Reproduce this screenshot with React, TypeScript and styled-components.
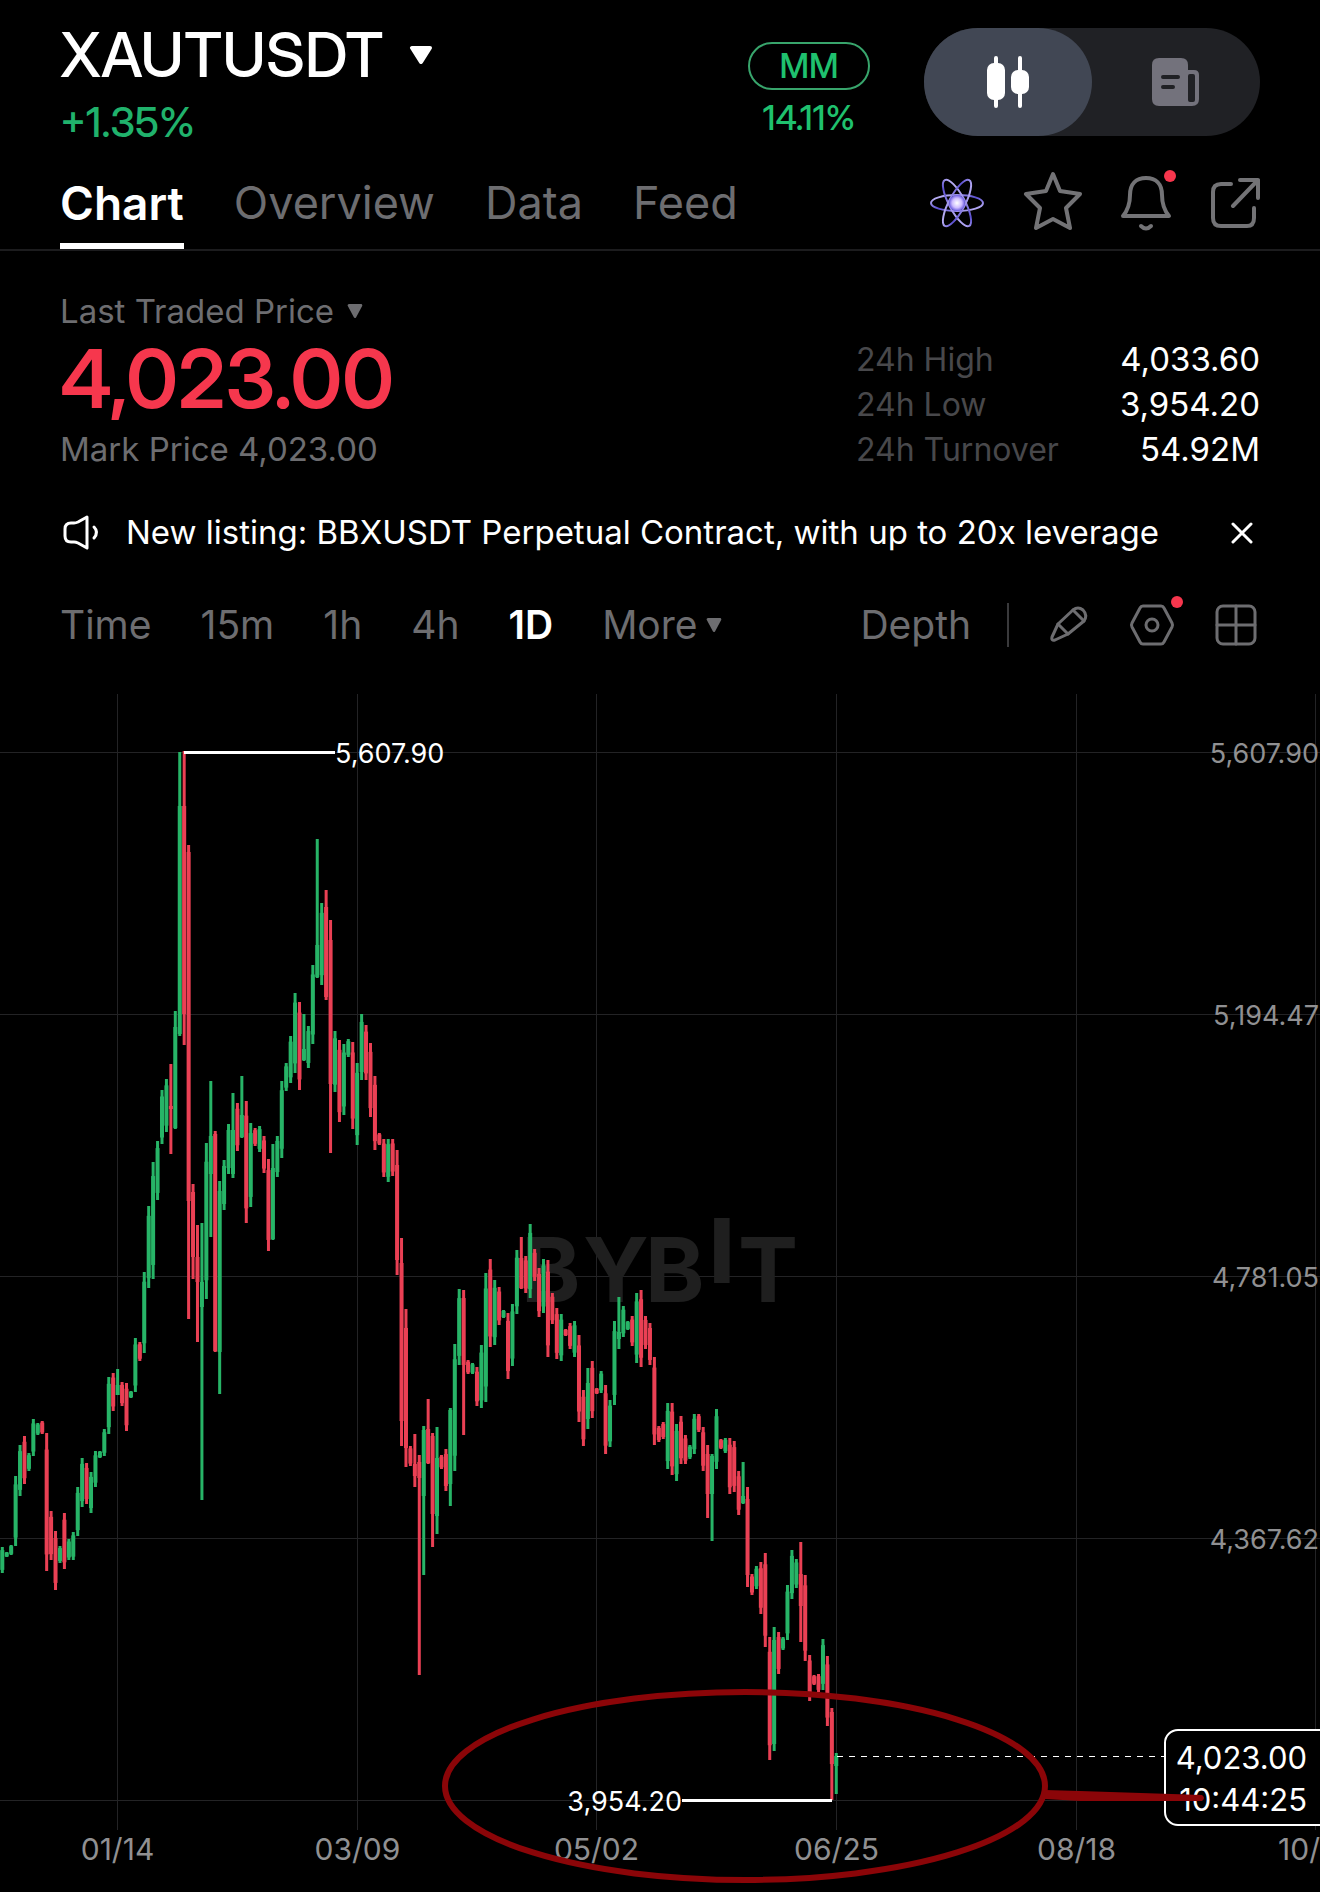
import React, { useState } from "react";
import styled, { createGlobalStyle, css } from "styled-components";

const color = {
  bg: "#000000",
  text: "#ffffff",
  muted: "#6d6d70",
  dim: "#48484b",
  line: "#1c1c1e",
  grid: "#232325",
  green: "#20b26c",
  greenBright: "#1fc16e",
  red: "#f6374d",
  candleUp: "#27b467",
  candleDown: "#ea4054",
  axis: "#909092",
  mark: "#8b0508",
};

const GlobalStyle = createGlobalStyle`
  *, *::before, *::after { box-sizing: border-box; }
  body {
    margin: 0;
    background: ${color.bg};
    color: ${color.text};
    font-family: Inter, "Liberation Sans", sans-serif;
  }
`;

const displayFont = css`
  font-family: "Inter Display", Inter, "Liberation Sans", sans-serif;
  font-variation-settings: "opsz" 32;
`;

const Page = styled.main`
  width: 100%;
  overflow: hidden;
`;

const PlainButton = styled.button`
  border: 0;
  padding: 0;
  background: none;
  color: inherit;
  font: inherit;
  display: flex;
  align-items: center;
  cursor: pointer;
`;

const Row = styled.div`
  display: flex;
  padding: 0 60px;
`;

const Header = styled(Row).attrs({ as: "header" })`
  padding-top: 28px;
  align-items: flex-start;
`;

const TitleBlock = styled.div`
  flex: 1;
`;

const PairButton = styled(PlainButton)`
  gap: 25px;
`;

const PairName = styled.h1`
  ${displayFont}
  margin: 0;
  font-size: 62px;
  line-height: 54px;
  font-weight: 500;
`;

const Change = styled.p`
  ${displayFont}
  margin: 20px 0 0;
  font-size: 41px;
  line-height: 40px;
  font-weight: 500;
  color: ${color.green};
`;

const MarginBlock = styled.div`
  ${displayFont}
  display: flex;
  flex-direction: column;
  align-items: center;
  gap: 11px;
  margin: 14px 54px 0 0;
  color: ${color.greenBright};
  font-size: 34px;
  line-height: 34px;
  font-weight: 500;
`;

const Pill = styled.span`
  display: flex;
  align-items: center;
  justify-content: center;
  width: 122px;
  height: 48px;
  border: 2px solid #38a56c;
  border-radius: 24px;
`;

const Toggle = styled.div`
  display: flex;
  width: 336px;
  height: 108px;
  border-radius: 54px;
  background: #202125;
`;

const ToggleButton = styled(PlainButton)<{ $active?: boolean }>`
  flex: 1;
  justify-content: center;
  border-radius: 54px;
  background: ${(p) => (p.$active ? "#414754" : "transparent")};
`;

const TabBar = styled(Row).attrs({ as: "nav" })`
  margin-top: 35px;
  justify-content: space-between;
  border-bottom: 2px solid ${color.line};
`;

const Tabs = styled.div`
  display: flex;
  gap: 50px;
`;

const Tab = styled(PlainButton)<{ $active?: boolean }>`
  padding-bottom: 14px;
  border-bottom: 6px solid ${(p) => (p.$active ? color.text : "transparent")};
  font-size: ${(p) => (p.$active ? 46 : 45)}px;
  line-height: 52px;
  font-weight: ${(p) => (p.$active ? 600 : 400)};
  color: ${(p) => (p.$active ? color.text : color.muted)};
`;

const TabActions = styled.div`
  display: flex;
  align-items: center;
  gap: 38px;
  height: 52px;
  color: #737376;
`;

const Badged = styled(PlainButton)`
  position: relative;
`;

const Dot = styled.span<{ $offset: number }>`
  position: absolute;
  top: -${(p) => p.$offset}px;
  right: -${(p) => p.$offset}px;
  width: 12px;
  height: 12px;
  border-radius: 50%;
  background: #f7364d;
`;

const PriceSection = styled(Row).attrs({ as: "section" })`
  padding-top: 40px;
  justify-content: space-between;
  align-items: flex-end;
`;

const PriceKind = styled(PlainButton)`
  gap: 13px;
  font-size: 33px;
  line-height: 40px;
  color: ${color.muted};
`;

const LastPrice = styled.p`
  ${displayFont}
  margin: 8px 0 7px;
  font-size: 81px;
  line-height: 80px;
  font-weight: 600;
  color: ${color.red};
`;

const MarkPrice = styled.p`
  margin: 0;
  font-size: 33px;
  line-height: 46px;
  color: ${color.muted};
`;

const Stats = styled.table`
  border-collapse: collapse;
  width: 404px;
  line-height: 45px;

  th {
    padding: 0;
    text-align: left;
    font-size: 32px;
    font-weight: 400;
    color: ${color.dim};
  }
  td {
    padding: 0;
    text-align: right;
    font-size: 33px;
  }
`;

const Notice = styled(Row)`
  margin-top: 40px;
  align-items: center;
  font-size: 33px;
  line-height: 40px;
`;

const NoticeText = styled.p`
  flex: 1;
  margin: 0 0 0 24px;
  white-space: nowrap;
`;

const CloseButton = styled(PlainButton)`
  margin-right: 7px;
`;

const Toolbar = styled(Row)`
  margin-top: 49px;
  align-items: center;
  justify-content: space-between;
  font-size: 39px;
  line-height: 48px;
  color: ${color.muted};
`;

const Periods = styled.div`
  display: flex;
  gap: 49px;
`;

const Period = styled(PlainButton)<{ $active?: boolean }>`
  gap: 8px;
  font-weight: ${(p) => (p.$active ? 600 : 400)};
  color: ${(p) => (p.$active ? color.text : color.muted)};
`;

const Tools = styled.div`
  display: flex;
  align-items: center;
  gap: 40px;
  margin-right: 3px;
`;

const Divider = styled.span`
  width: 2px;
  height: 44px;
  margin-left: -4px;
  background: #3a3a3c;
`;

const ChartArea = styled.figure`
  margin: 45px 0 0;
`;

const ChartSvg = styled.svg`
  display: block;
  width: 100%;
  height: auto;
  font-family: Inter, "Liberation Sans", sans-serif;
`;

function Caret({ width, height }: { width: number; height: number }) {
  return (
    <svg width={width} height={height} viewBox="0 0 24 20" preserveAspectRatio="none" aria-hidden="true">
      <path
        d="M3 2H21L12 18Z"
        fill="currentColor"
        stroke="currentColor"
        strokeWidth="4"
        strokeLinejoin="round"
      />
    </svg>
  );
}

type IconProps = { w: number; h: number; stroke?: number; children: React.ReactNode };

function Icon({ w, h, stroke = 3, children }: IconProps) {
  return (
    <svg
      width={w}
      height={h}
      viewBox={`0 0 ${w} ${h}`}
      fill="none"
      stroke="currentColor"
      strokeWidth={stroke}
      strokeLinejoin="round"
      strokeLinecap="round"
      aria-hidden="true"
    >
      {children}
    </svg>
  );
}

const CandlesIcon = () => (
  <Icon w={46} h={56} stroke={4}>
    <path d="M11 4V52M35 4V52" />
    <g fill="currentColor" stroke="none">
      <rect x="2" y="9" width="18" height="37" rx="7" />
      <rect x="26" y="16" width="18" height="24" rx="7" />
    </g>
  </Icon>
);

const NewsIcon = () => (
  <Icon w={48} h={48} stroke={4}>
    <g stroke="none">
      <path d="M30 12H42Q47 12 47 17V41Q47 48 40 48H24Z" fill="#73727c" />
      <rect x="36" y="16" width="7" height="28" rx="2" fill="#202125" />
      <path d="M7 0H29Q36 0 36 7V48H7Q0 48 0 41V7Q0 0 7 0Z" fill="#73727c" />
    </g>
    <path d="M11 19H26M11 29H21" stroke="#202125" />
  </Icon>
);

const AtomIcon = () => (
  <Icon w={54} h={52} stroke={2}>
    <defs>
      <linearGradient id="orbit" x1="0" y1="0" x2="1" y2="1">
        <stop offset="0" stopColor="#d9d0ff" />
        <stop offset="0.5" stopColor="#5b4fd0" />
        <stop offset="1" stopColor="#d3c8ff" />
      </linearGradient>
      <radialGradient id="nucleus">
        <stop offset="0" stopColor="#ffffff" />
        <stop offset="0.6" stopColor="#cdbcff" />
        <stop offset="1" stopColor="#6a5be0" />
      </radialGradient>
    </defs>
    <g stroke="url(#orbit)">
      <ellipse cx="27" cy="26" rx="26" ry="8" />
      <ellipse cx="27" cy="26" rx="26" ry="8" transform="rotate(62 27 26)" />
      <ellipse cx="27" cy="26" rx="26" ry="8" transform="rotate(-62 27 26)" />
    </g>
    <circle cx="27" cy="26" r="8" fill="url(#nucleus)" stroke="none" />
  </Icon>
);

const StarIcon = () => (
  <Icon w={60} h={64} stroke={4}>
    <path d="M31 3L38 20L58 23L44 37L48 57L31 48L14 57L18 37L4 23L24 20Z" />
  </Icon>
);

const BellIcon = () => (
  <Icon w={52} h={58} stroke={4}>
    <path d="M3 42C8 36 10 30 10 21C10 10 16 4 26 4S42 10 42 21C42 30 44 36 49 42Z" />
    <path d="M21 52Q26 57 31 52" />
  </Icon>
);

const ShareIcon = () => (
  <Icon w={50} h={52} stroke={4}>
    <path d="M21 7H11Q3 7 3 15V41Q3 49 11 49H37Q44 49 44 41V31" />
    <path d="M30 3H48V21M48 3L23 29" />
  </Icon>
);

const SpeakerIcon = () => (
  <Icon w={42} h={38}>
    <path d="M27 4L18 9Q16 10 14 10H11Q5 10 5 16V23Q5 29 11 29H14Q16 29 18 30L27 35Z" />
    <path d="M34 14Q39 19 34 25" />
  </Icon>
);

const CloseIcon = () => (
  <Icon w={22} h={24}>
    <path d="M2 4L20 22M20 4L2 22" />
  </Icon>
);

const PencilIcon = () => (
  <Icon w={40} h={38}>
    <path d="M9 18L24 4Q29 0 34 4Q39 9 35 15L19 28L6 34Q2 35 3 31Z" />
    <path d="M24 4L35 15M9 18L19 28" />
  </Icon>
);

const HexIcon = () => (
  <Icon w={46} h={42}>
    <path d="M14 2H32Q34 2 35 4L43 19Q44 21 43 23L35 38Q34 40 32 40H14Q12 40 11 38L3 23Q2 21 3 19L11 4Q12 2 14 2Z" />
    <circle cx="23" cy="21" r="6" />
  </Icon>
);

const GridIcon = () => (
  <Icon w={42} h={42}>
    <rect x="2" y="2" width="38" height="38" rx="6" />
    <path d="M21 2V40M2 21H40" />
  </Icon>
);

/* One daily candle: direction, wick top, wick bottom, optional body top and bottom. */
type Candle = ["G" | "R", number, number, number?, number?];

const candles: Candle[] = [
  ["G", 853, 879], ["G", 858, 863], ["G", 851, 861], ["G", 782, 852], ["G", 751, 802],
  ["R", 742, 790], ["G", 759, 777], ["G", 725, 762], ["G", 729, 741], ["R", 727, 740],
  ["R", 739, 877], ["R", 817, 866], ["R", 837, 896], ["G", 852, 869], ["R", 819, 875],
  ["G", 845, 866], ["G", 838, 866], ["G", 793, 842], ["G", 764, 813], ["R", 769, 810],
  ["G", 778, 819], ["G", 757, 793], ["G", 757, 764], ["G", 735, 762], ["G", 683, 740],
  ["R", 679, 717], ["G", 675, 701, 691, 701], ["R", 688, 712], ["R", 689, 737], ["G", 697, 704],
  ["G", 644, 698], ["R", 648, 667], ["G", 578, 659], ["G", 512, 594], ["G", 468, 585],
  ["G", 447, 506], ["G", 396, 450], ["G", 385, 438], ["R", 370, 460, 412, 415], ["G", 317, 435, 333, 434],
  ["G", 58, 342, 112, 340], ["R", 57, 351, 112, 320], ["R", 151, 625, 158, 507], ["R", 490, 585, 498, 563], ["R", 531, 648, 563, 588],
  ["G", 529, 806, 588, 613], ["G", 449, 605], ["G", 387, 543, 442, 480], ["R", 437, 658, 440, 657], ["G", 487, 700, 497, 658],
  ["G", 466, 516], ["G", 430, 480], ["G", 399, 484, 436, 480], ["R", 409, 457], ["G", 382, 444, 421, 443],
  ["R", 407, 529], ["G", 429, 513], ["R", 434, 452], ["G", 432, 458], ["R", 442, 479],
  ["R", 465, 557], ["G", 450, 546, 474, 545], ["G", 442, 483], ["G", 387, 464], ["G", 369, 397],
  ["G", 342, 389], ["G", 299, 379], ["R", 308, 396], ["G", 320, 367, 355, 366], ["G", 332, 374],
  ["G", 271, 350], ["G", 145, 284, 251, 283], ["G", 209, 291], ["R", 196, 306, 213, 303], ["R", 226, 459, 246, 390],
  ["G", 337, 398], ["R", 346, 428], ["G", 350, 421], ["G", 345, 363], ["R", 348, 435],
  ["G", 369, 451], ["G", 320, 386], ["R", 331, 386], ["R", 349, 423], ["R", 382, 456],
  ["R", 439, 451], ["R", 445, 483], ["G", 445, 488], ["R", 445, 482], ["R", 456, 581],
  ["R", 544, 752], ["R", 615, 773], ["R", 752, 772], ["R", 740, 793, 770, 782], ["R", 761, 981, 768, 784],
  ["G", 732, 881, 736, 802], ["R", 705, 770, 735, 769], ["R", 739, 853, 742, 820], ["G", 733, 840, 764, 822], ["R", 761, 775],
  ["R", 755, 797], ["G", 714, 812, 716, 790], ["G", 650, 777], ["G", 595, 671], ["R", 596, 741, 604, 671],
  ["R", 666, 680], ["G", 669, 680], ["R", 673, 712], ["G", 651, 714], ["G", 579, 708],
  ["R", 565, 653], ["G", 586, 651], ["R", 593, 631], ["G", 616, 624], ["R", 619, 685],
  ["G", 610, 672], ["G", 556, 620], ["R", 543, 595, 564, 594], ["R", 562, 599], ["G", 530, 604],
  ["R", 555, 587], ["R", 574, 623], ["G", 565, 619], ["R", 566, 663], ["R", 599, 630],
  ["R", 614, 665], ["G", 620, 667], ["R", 635, 642], ["R", 629, 655], ["G", 627, 663],
  ["R", 641, 728], ["R", 696, 752], ["G", 674, 735, 689, 725], ["R", 667, 724], ["R", 694, 700],
  ["G", 677, 699], ["R", 691, 760], ["G", 706, 753], ["G", 627, 711], ["G", 603, 655, 638, 645],
  ["G", 612, 643], ["G", 627, 636], ["R", 622, 652], ["G", 599, 669], ["R", 596, 673],
  ["R", 622, 655], ["R", 629, 671], ["R", 663, 751], ["R", 732, 748], ["R", 728, 745],
  ["G", 709, 775], ["R", 709, 781], ["G", 730, 787], ["R", 722, 770], ["R", 741, 770],
  ["G", 751, 765], ["G", 720, 760], ["R", 720, 738], ["R", 733, 777], ["R", 751, 824, 760, 800],
  ["G", 760, 847, 762, 800], ["G", 715, 775], ["R", 745, 755], ["G", 744, 759], ["R", 744, 800],
  ["R", 747, 798], ["R", 777, 821], ["G", 768, 810, 802, 809], ["R", 793, 893], ["R", 880, 901],
  ["G", 872, 895], ["R", 868, 920], ["R", 859, 953], ["R", 943, 1066], ["G", 933, 1057, 946, 1050],
  ["R", 938, 980], ["G", 943, 956], ["G", 891, 946], ["G", 856, 905], ["G", 865, 894],
  ["R", 848, 948, 880, 912], ["R", 881, 967], ["R", 961, 1007], ["R", 981, 991], ["R", 980, 998],
  ["G", 945, 996], ["R", 962, 1032], ["R", 1014, 1106, 1018, 1070], ["G", 1059, 1100, 1062, 1072],
];

const FIRST_X = 2.3;
const STEP = 4.436;

const priceAxis = [
  { label: "5,607.90", y: 58.5 },
  { label: "5,194.47", y: 320.5 },
  { label: "4,781.05", y: 582.5 },
  { label: "4,367.62", y: 844.5 },
  { label: "", y: 1106.5 },
];

const dateAxis = [
  { label: "01/14", x: 117.5 },
  { label: "03/09", x: 357.5 },
  { label: "05/02", x: 596.5 },
  { label: "06/25", x: 836.5 },
  { label: "08/18", x: 1076.5 },
];

const watermark = [
  { letter: "B", x: 521, y: 608, weight: 700 },
  { letter: "Y", x: 583, y: 608, weight: 700 },
  { letter: "B", x: 645, y: 608, weight: 700 },
  { letter: "I", x: 709, y: 589, weight: 800 },
  { letter: "T", x: 738, y: 608, weight: 700 },
];

function CandleShape({ candle, index }: { candle: Candle; index: number }) {
  const [dir, high, low, top, bottom] = candle;
  const inset = (low - high) * 0.12;
  const bodyTop = top ?? high + inset;
  const bodyBottom = bottom ?? low - inset;
  const x = FIRST_X + index * STEP;
  return (
    <g fill={dir === "G" ? color.candleUp : color.candleDown}>
      <rect x={x - 1.5} y={high} width={3} height={low - high} />
      <rect x={x - 2} y={bodyTop} width={4} height={bodyBottom - bodyTop} />
    </g>
  );
}

function PriceChart() {
  return (
    <ChartArea>
      <ChartSvg viewBox="0 0 1320 1198" role="img" aria-label="XAUTUSDT daily price chart">
        <g stroke={color.grid} strokeWidth="1">
          {priceAxis.map((t) => (
            <line key={t.y} x1="0" x2="1320" y1={t.y} y2={t.y} />
          ))}
          {dateAxis.map((t) => (
            <line key={t.x} x1={t.x} x2={t.x} y1="0" y2="1136" />
          ))}
          <line x1="1315.5" x2="1315.5" y1="0" y2="1136" />
        </g>
        <g fill="#1f1f1f" fontSize="90">
          {watermark.map((w) => (
            <text key={w.x} x={w.x} y={w.y} fontWeight={w.weight}>
              {w.letter}
            </text>
          ))}
        </g>
        {candles.map((c, i) => (
          <CandleShape key={i} candle={c} index={i} />
        ))}
        <g fill={color.axis} fontSize="27" textAnchor="end">
          {priceAxis.map((t) => (
            <text key={t.y} x="1319" y={t.y + 10}>
              {t.label}
            </text>
          ))}
        </g>
        <g fill={color.axis} fontSize="30" textAnchor="middle">
          {dateAxis.map((t) => (
            <text key={t.x} x={t.x} y="1166">
              {t.label}
            </text>
          ))}
          <text x="1320" y="1166" textAnchor="end">10/</text>
        </g>
        <g stroke={color.text} strokeWidth="3">
          <path d="M184 58.5H335M682 1106.5H832" />
          <path d="M837 1062.5H1165" strokeWidth="1" strokeDasharray="6 6" />
        </g>
        <g fill={color.text} fontSize="27">
          <text x="335" y="69">5,607.90</text>
          <text x="682" y="1117" textAnchor="end">3,954.20</text>
        </g>
        <rect
          x="1165"
          y="1036"
          width="170"
          height="95"
          rx="13"
          fill={color.bg}
          stroke={color.text}
          strokeWidth="2"
        />
        <g fill={color.text} fontSize="31" textAnchor="end">
          <text x="1307" y="1075">4,023.00</text>
          <text x="1307" y="1117">10:44:25</text>
        </g>
        <ellipse cx="745" cy="1092" rx="300" ry="94" fill="none" stroke={color.mark} strokeWidth="6" />
        <path
          d="M1045 1096L1080 1097L1202 1101Q1206 1104 1202 1107L1080 1107L1045 1105Z"
          fill={color.mark}
        />
      </ChartSvg>
    </ChartArea>
  );
}

const tabs = ["Chart", "Overview", "Data", "Feed"];
const periods = ["Time", "15m", "1h", "4h", "1D"];
const stats = [
  ["24h High", "4,033.60"],
  ["24h Low", "3,954.20"],
  ["24h Turnover", "54.92M"],
];

export default function App() {
  const [tab, setTab] = useState("Chart");
  const [period, setPeriod] = useState("1D");

  return (
    <Page>
      <GlobalStyle />
      <Header>
        <TitleBlock>
          <PairButton>
            <PairName>XAUTUSDT</PairName>
            <Caret width={24} height={18} />
          </PairButton>
          <Change>+1.35%</Change>
        </TitleBlock>
        <MarginBlock>
          <Pill>MM</Pill>
          <span>14.11%</span>
        </MarginBlock>
        <Toggle>
          <ToggleButton $active aria-label="Chart view">
            <CandlesIcon />
          </ToggleButton>
          <ToggleButton aria-label="News view">
            <NewsIcon />
          </ToggleButton>
        </Toggle>
      </Header>

      <TabBar>
        <Tabs>
          {tabs.map((t) => (
            <Tab key={t} $active={t === tab} onClick={() => setTab(t)}>
              {t}
            </Tab>
          ))}
        </Tabs>
        <TabActions>
          <PlainButton aria-label="Insights">
            <AtomIcon />
          </PlainButton>
          <PlainButton aria-label="Favourite">
            <StarIcon />
          </PlainButton>
          <Badged aria-label="Alerts">
            <BellIcon />
            <Dot $offset={4} />
          </Badged>
          <PlainButton aria-label="Share">
            <ShareIcon />
          </PlainButton>
        </TabActions>
      </TabBar>

      <PriceSection>
        <div>
          <PriceKind>
            Last Traded Price
            <Caret width={16} height={14} />
          </PriceKind>
          <LastPrice>4,023.00</LastPrice>
          <MarkPrice>Mark Price 4,023.00</MarkPrice>
        </div>
        <Stats>
          <tbody>
            {stats.map(([name, value]) => (
              <tr key={name}>
                <th scope="row">{name}</th>
                <td>{value}</td>
              </tr>
            ))}
          </tbody>
        </Stats>
      </PriceSection>

      <Notice>
        <SpeakerIcon />
        <NoticeText>New listing: BBXUSDT Perpetual Contract, with up to 20x leverage</NoticeText>
        <CloseButton aria-label="Dismiss">
          <CloseIcon />
        </CloseButton>
      </Notice>

      <Toolbar>
        <Periods>
          {periods.map((p) => (
            <Period key={p} $active={p === period} onClick={() => setPeriod(p)}>
              {p}
            </Period>
          ))}
          <Period>
            More
            <Caret width={16} height={14} />
          </Period>
        </Periods>
        <Tools>
          <PlainButton>Depth</PlainButton>
          <Divider />
          <PlainButton aria-label="Draw">
            <PencilIcon />
          </PlainButton>
          <Badged aria-label="Chart settings">
            <HexIcon />
            <Dot $offset={8} />
          </Badged>
          <PlainButton aria-label="Layout">
            <GridIcon />
          </PlainButton>
        </Tools>
      </Toolbar>

      <PriceChart />
    </Page>
  );
}
